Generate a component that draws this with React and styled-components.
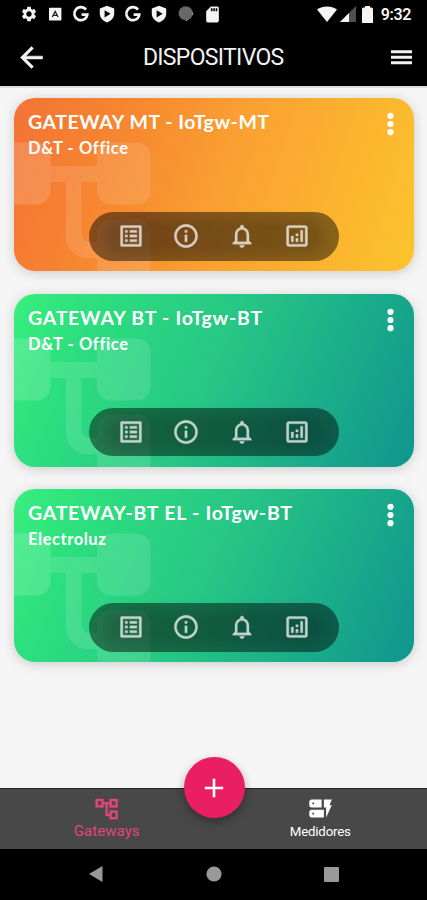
import React from "react";
import styled, { createGlobalStyle, css } from "styled-components";
import {
  MdArrowBack,
  MdDynamicForm,
  MdInfoOutline,
  MdNotificationsNone,
  MdOutlineAnalytics,
  MdOutlineListAlt,
  MdSdCard,
  MdSettings,
} from "react-icons/md";

const GlobalStyle = createGlobalStyle`
  *, *::before, *::after { box-sizing: border-box; }
  body { margin: 0; background: #000; font-family: Roboto, sans-serif; }
`;

const Screen = styled.div`
  width: 427px;
  height: 900px;
  display: flex;
  flex-direction: column;
  background: #f5f5f5;
  overflow: hidden;
`;

const StatusBar = styled.div`
  height: 28px;
  flex: none;
  display: flex;
  align-items: center;
  justify-content: space-between;
  padding: 0 16px 0 20px;
  background: #000;
  color: #f4f4f4;
`;

const StatusGroup = styled.div`
  display: flex;
  align-items: center;
  gap: ${(p) => p.$gap}px;
  svg { display: block; flex: none; }
`;

const Clock = styled.span`
  font-size: 16px;
  line-height: 20px;
  font-weight: 600;
  letter-spacing: -0.4px;
  margin: 2px 0 0 2px;
`;

const Header = styled.header`
  height: 58px;
  flex: none;
  display: flex;
  align-items: center;
  justify-content: space-between;
  padding: 0 15px 0 14.5px;
  background: #000;
  color: #f2f2f2;
  svg { display: block; flex: none; }
`;

const BackIcon = styled(MdArrowBack)`
  stroke: currentColor;
  stroke-width: 0.4;
  path[fill="none"] { stroke: none; }
`;

const Title = styled.h1`
  margin: 2px 12px 0 0;
  font-size: 23px;
  line-height: 28px;
  font-weight: 400;
  letter-spacing: -0.68px;
`;

const List = styled.main`
  flex: 1;
  min-height: 0;
  display: flex;
  flex-direction: column;
  gap: 22.5px;
  padding: 10px 13px 0 14px;
  border-top: 2px solid #dcdcdc;
`;

const tones = {
  orange: css`background: linear-gradient(108deg, #f37335 0%, #f7882f 28%, #faa032 52%, #fcc42d 100%);`,
  green: css`background: linear-gradient(113deg, #38ef7d 0%, #2de07e 16%, #27c785 48%, #11998e 96%);`,
};

const Card = styled.article`
  position: relative;
  height: 173px;
  flex: none;
  display: flex;
  flex-direction: column;
  border-radius: 21px;
  overflow: hidden;
  padding: 12px 14px 10.5px;
  color: #fff;
  ${(p) => tones[p.$tone]}
`;

const CardShadow = styled.div`
  flex: none;
  border-radius: 21px;
  box-shadow: 0 2px 12px rgba(0, 0, 0, 0.17);
`;

const Watermark = styled.svg`
  position: absolute;
  left: 0;
  top: 0;
`;

const CardTop = styled.div`
  position: relative;
  display: flex;
  justify-content: space-between;
  align-items: flex-start;
  flex: 1;
`;

const CardName = styled.h2`
  margin: 0;
  font-family: Lato, sans-serif;
  font-size: 19.5px;
  line-height: 24px;
  font-weight: 700;
  white-space: nowrap;
  letter-spacing: ${(p) => p.$spacing}px;
`;

const CardPlace = styled.p`
  margin: 2px 0 0;
  font-family: Lato, sans-serif;
  font-size: 16.5px;
  line-height: 24px;
  font-weight: 700;
  letter-spacing: ${(p) => p.$spacing}px;
`;

const MoreButton = styled.button`
  border: 0;
  padding: 0;
  margin: 2px 6px 0 0;
  background: none;
  color: #fff;
  svg { display: block; }
`;

const Actions = styled.div`
  position: relative;
  align-self: center;
  width: 250px;
  height: 48.5px;
  flex: none;
  display: flex;
  align-items: center;
  justify-content: center;
  gap: 27.6px;
  border-radius: 25px;
  background: rgba(0, 0, 0, 0.46);
  &::before {
    content: "";
    position: absolute;
    inset: 14px 22px;
    border-radius: 12px;
    box-shadow: 0 0 12px 8px rgba(0, 0, 0, 0.12);
    background: rgba(0, 0, 0, 0.12);
  }
`;

const ActionButton = styled.button`
  position: relative;
  border: 0;
  padding: 0;
  background: none;
  color: #fff;
  opacity: 0.73;
  svg { display: block; stroke: currentColor; stroke-width: 0.3; }
  path[fill="none"] { stroke: none; }
`;

const TabBar = styled.nav`
  position: relative;
  height: 61px;
  flex: none;
  display: grid;
  grid-template-columns: 1fr 1fr;
  background: #484848;
  border-top: 1px solid #222;
`;

const Tab = styled.button`
  border: 0;
  padding: 6px 0 0;
  background: none;
  display: flex;
  flex-direction: column;
  align-items: center;
  color: ${(p) => (p.$active ? "#e0457c" : "#fff")};
  svg { display: block; flex: none; }
`;

const TabLabel = styled.span`
  font-family: Roboto, sans-serif;
  font-size: ${(p) => (p.$active ? 15 : 13.3)}px;
  line-height: 19px;
  letter-spacing: ${(p) => (p.$active ? 0.05 : -0.2)}px;
`;

const AddButton = styled.button`
  position: absolute;
  left: 183.5px;
  top: -32px;
  width: 61px;
  height: 61px;
  display: grid;
  place-items: center;
  padding: 0;
  border: 0;
  border-radius: 50%;
  color: #fff;
  background: #e91e63;
  box-shadow: 0 4px 10px rgba(0, 0, 0, 0.32);
  svg { display: block; }
`;

const SystemNav = styled.div`
  height: 51px;
  flex: none;
  display: flex;
  align-items: center;
  justify-content: space-between;
  padding: 0 88px 1px 89px;
  background: #000;
  color: #999;
  svg { display: block; }
`;

const LetterBadge = () => (
  <svg width="18" height="16" viewBox="0 0 18 16">
    <rect x="3" y="1.8" width="12.4" height="12.6" rx=".6" fill="currentColor" />
    <path d="M6.3 11 9.2 5.4l2.9 5.6M7.4 9.4h3.6" fill="none" stroke="#222" strokeWidth="1.3" />
  </svg>
);

const GoogleMark = () => (
  <svg width="18" height="18" viewBox="0 0 18 18">
    <path d="M14 4.7A6.5 6.5 0 1 0 15.3 9.6H9.6" fill="none" stroke="currentColor" strokeWidth="2.7" />
  </svg>
);

const Shield = () => (
  <svg width="18" height="18" viewBox="0 0 18 18">
    <path d="M9 .8 16.2 3.4v5.2c0 4.2-3 7.2-7.2 8.9-4.2-1.7-7.2-4.7-7.2-8.9V3.4z" fill="currentColor" />
    <path d="m6.6 5.2 6 3.6-6 3.6z" fill="#000" />
  </svg>
);

const Disc = () => (
  <svg width="18" height="18" viewBox="0 0 18 18">
    <path d="m9.500 16 7-7-2-3.500-8 8z" fill="#ddd" />
    <circle cx="8.7" cy="8.2" r="7" fill="#686868" />
  </svg>
);

const Wifi = () => (
  <svg width="20" height="16" viewBox="0 0 20 16">
    <path d="M0 3.6C5.8-.7 14.2-.7 20 3.6L10 16z" fill="currentColor" />
  </svg>
);

const Signal = () => (
  <svg width="16" height="16" viewBox="0 0 16 16">
    <path d="M16 0v16H0z" fill="#505050" />
    <path d="M9 7v9H0z" fill="currentColor" />
  </svg>
);

const Battery = () => (
  <svg width="17" height="17" viewBox="-3 0 17 17">
    <path d="M3 0h5v1.5h1.5A1.5 1.5 0 0 1 11 3V17H0V3A1.5 1.5 0 0 1 1.5 1.5H3z" fill="currentColor" />
  </svg>
);

const MenuIcon = () => (
  <svg width="21" height="15" viewBox="0 0 21 15">
    <path d="M0 1.8h21M0 7.3h21M0 12.8h21" stroke="currentColor" strokeWidth="3" />
  </svg>
);

const Dots = () => (
  <svg width="7" height="24" viewBox="0 0 7 24">
    <circle cx="3.5" cy="3.8" r="3.1" fill="currentColor" />
    <circle cx="3.5" cy="12" r="3.1" fill="currentColor" />
    <circle cx="3.5" cy="20.2" r="3.1" fill="currentColor" />
  </svg>
);

const TreeIcon = () => (
  <svg width="27" height="27" viewBox="0 0 27 27" fill="none" stroke="currentColor" strokeWidth="2.4">
    <rect x="3.7" y="5" width="5.8" height="6.4" />
    <rect x="17.6" y="5" width="6" height="6.4" />
    <rect x="17.6" y="16.600" width="6" height="6.6" />
    <path d="M9.500 8.200h8M13.600 8.200v11.800h4" />
  </svg>
);

const TreeWatermark = () => (
  <Watermark width="140" height="173" viewBox="0 0 140 173" fill="#fff">
    <rect x="-17" y="44.5" width="53.5" height="62" rx="14" fillOpacity=".15" />
    <rect x="83" y="44.5" width="53.5" height="62" rx="14" fillOpacity=".12" />
    <rect x="83" y="121" width="53.5" height="62" rx="14" fillOpacity=".12" />
    <path
      d="M36.5 68H83v16H67.5v52a8 8 0 0 0 8 8H83v16H73a21 21 0 0 1-21-21V84H36.5z"
      fillOpacity=".12"
    />
  </Watermark>
);

const actions = [
  ["Lista", MdOutlineListAlt],
  ["Info", MdInfoOutline],
  ["Alertas", MdNotificationsNone],
  ["Datos", MdOutlineAnalytics],
];

const gateways = [
  { name: "GATEWAY MT - IoTgw-MT", place: "D&T - Office", tone: "orange", ns: 0.52, ps: 0.63 },
  { name: "GATEWAY BT - IoTgw-BT", place: "D&T - Office", tone: "green", ns: 0.75, ps: 0.63 },
  { name: "GATEWAY-BT EL - IoTgw-BT", place: "Electroluz", tone: "green", ns: 0.75, ps: 0.55 },
];

function GatewayCard({ gateway }) {
  return (
    <CardShadow>
      <Card $tone={gateway.tone}>
        <TreeWatermark />
        <CardTop>
          <div>
            <CardName $spacing={gateway.ns}>{gateway.name}</CardName>
            <CardPlace $spacing={gateway.ps}>{gateway.place}</CardPlace>
          </div>
          <MoreButton aria-label="Más">
            <Dots />
          </MoreButton>
        </CardTop>
        <Actions>
          {actions.map(([label, Icon]) => (
            <ActionButton key={label} aria-label={label}>
              <Icon size={28} />
            </ActionButton>
          ))}
        </Actions>
      </Card>
    </CardShadow>
  );
}

export default function App() {
  return (
    <>
      <GlobalStyle />
      <Screen>
        <StatusBar>
          <StatusGroup $gap={8.1}>
            <MdSettings size={18} />
            <LetterBadge />
            <GoogleMark />
            <Shield />
            <GoogleMark />
            <Shield />
            <Disc />
            <MdSdCard size={19} />
          </StatusGroup>
          <StatusGroup $gap={2.8}>
            <Wifi />
            <Signal />
            <Battery />
            <Clock>9:32</Clock>
          </StatusGroup>
        </StatusBar>
        <Header>
          <BackIcon size={33} />
          <Title>DISPOSITIVOS</Title>
          <MenuIcon />
        </Header>
        <List>
          {gateways.map((g) => (
            <GatewayCard key={g.name} gateway={g} />
          ))}
        </List>
        <TabBar>
          <Tab $active>
            <TreeIcon />
            <TabLabel $active>Gateways</TabLabel>
          </Tab>
          <Tab>
            <MdDynamicForm size={27} />
            <TabLabel>Medidores</TabLabel>
          </Tab>
          <AddButton aria-label="Agregar">
            <svg width="20" height="20" viewBox="0 0 20 20">
              <path d="M10 .8v18.4M.8 10h18.4" stroke="currentColor" strokeWidth="2.6" />
            </svg>
          </AddButton>
        </TabBar>
        <SystemNav>
          <svg width="14" height="16" viewBox="0 0 14 16">
            <path d="M13.5 0v16L0 8z" fill="currentColor" />
          </svg>
          <svg width="16" height="16" viewBox="0 0 16 16">
            <circle cx="8" cy="8" r="7.6" fill="currentColor" />
          </svg>
          <svg width="15" height="15" viewBox="0 0 15 15">
            <rect width="15" height="15" rx="1" fill="currentColor" />
          </svg>
        </SystemNav>
      </Screen>
    </>
  );
}
